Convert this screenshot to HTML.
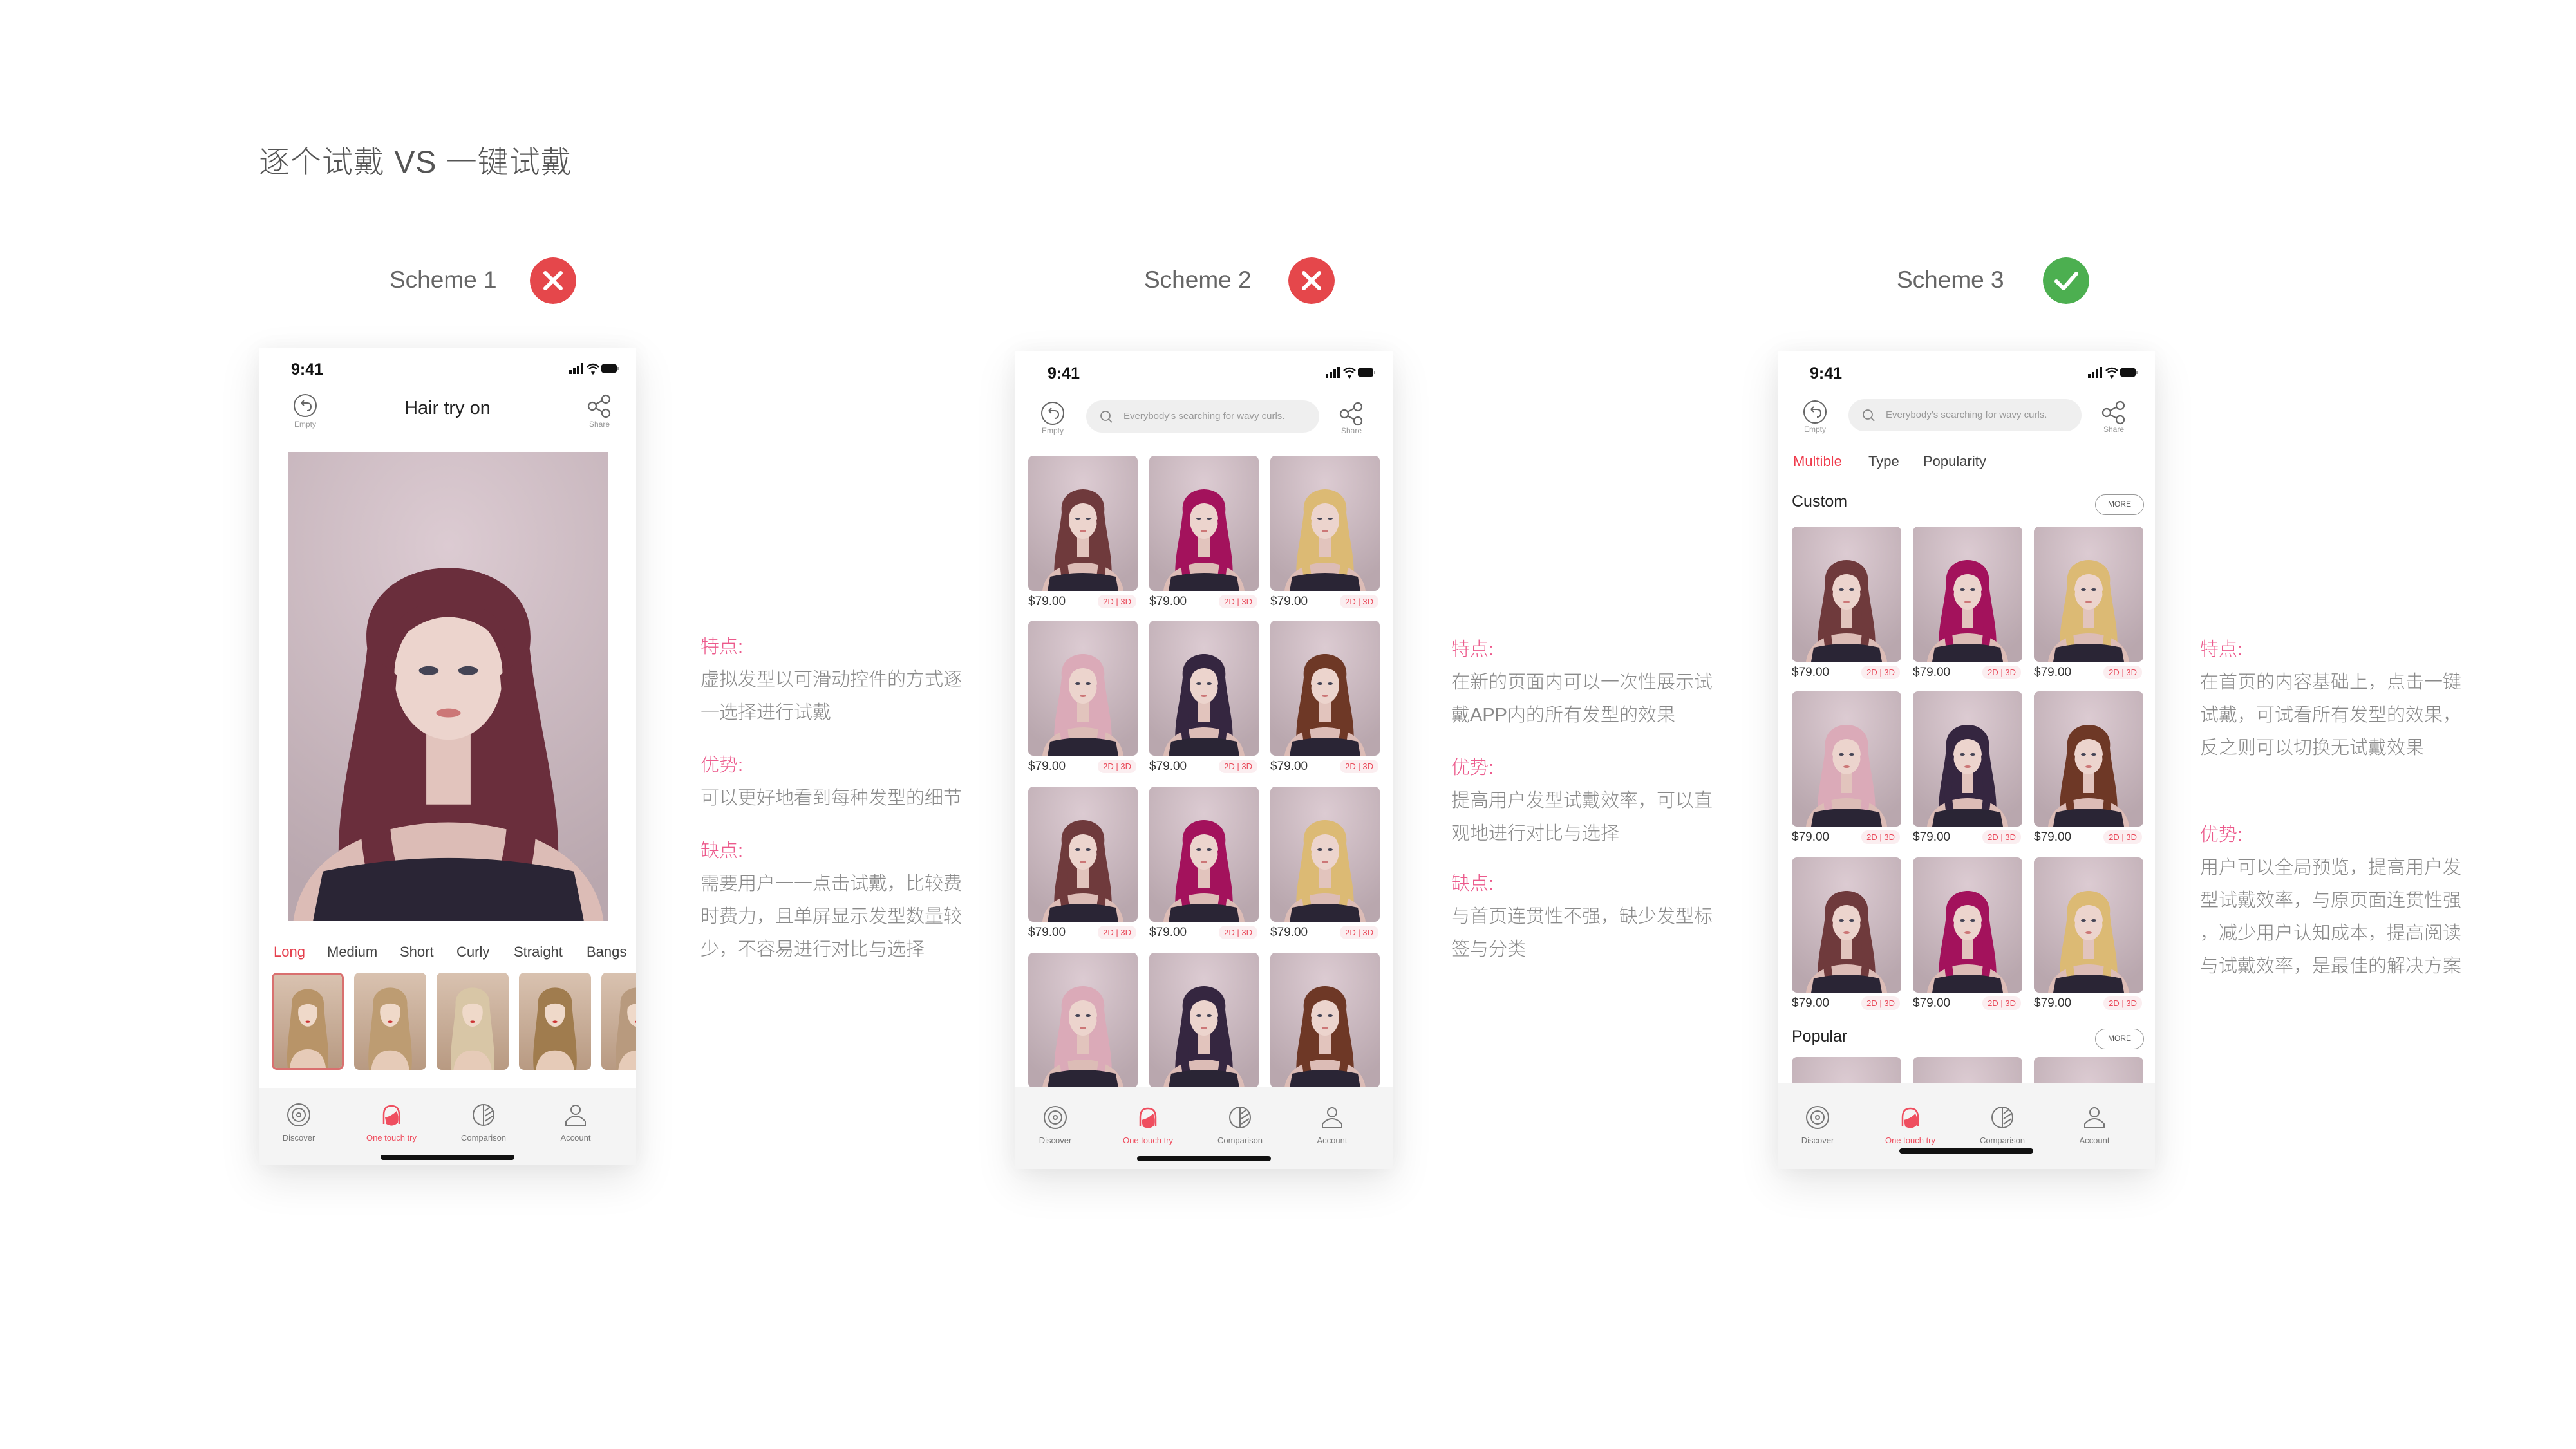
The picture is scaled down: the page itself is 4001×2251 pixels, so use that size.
<!DOCTYPE html>
<html><head><meta charset="utf-8">
<style>
*{margin:0;padding:0;box-sizing:border-box}
body{width:4001px;height:2251px;background:#fff;position:relative;overflow:hidden;font-family:"Liberation Sans","Noto Sans CJK SC",sans-serif;color:#333}
.abs{position:absolute}
.title{left:402px;top:212px;font-size:48px;color:#555;font-weight:300;letter-spacing:1px}
.sch{font-size:37px;color:#666;font-weight:300}
.ic{width:72px;height:72px;border-radius:50%}
.phone{position:absolute;width:586px;height:1270px;background:#fff;box-shadow:0 22px 60px rgba(0,0,0,.10),0 0 30px rgba(0,0,0,.04);overflow:hidden}
.time{position:absolute;left:50px;top:20px;font-size:25px;font-weight:bold;color:#111}
.stat{position:absolute;right:26px;top:24px}
.lbl{position:absolute;font-size:12px;color:#999;text-align:center;width:60px}
.nav{position:absolute;left:0;right:0;top:1140px;bottom:0;background:#f4f4f4}
.nv{position:absolute;top:52px;width:120px;text-align:center;font-size:13px;color:#777}
.nv svg{display:block;margin:0 auto 8px}
.home{position:absolute;left:189px;top:108px;width:208px;height:8px;border-radius:4px;background:#111}
.txt{position:absolute;font-size:29px;line-height:51px;color:#8a8a8a;font-family:"Liberation Sans","Noto Sans CJK SC",sans-serif;font-weight:300}
.txt .h{color:#ec5a8c}
.cell{position:absolute;width:170px}
.cell svg{display:block;border-radius:8px;width:170px;height:210px}
.price{font-size:19px;color:#333;margin-top:6px;height:24px;position:relative}
.badge{position:absolute;right:2px;top:0;font-size:13px;color:#e94b5b;background:#fbeef0;border-radius:10px;padding:3px 8px}
.tab{position:absolute;font-size:22px;color:#444}
</style></head><body>
<svg width="0" height="0" style="position:absolute">
<defs>
<radialGradient id="bg" cx="50%" cy="20%" r="80%"><stop offset="0" stop-color="#dccbd2"/><stop offset="1" stop-color="#b9a7ae"/></radialGradient>
<linearGradient id="bgw" x1="0" y1="0" x2="0" y2="1"><stop offset="0" stop-color="#d9c2b0"/><stop offset="1" stop-color="#b89a82"/></linearGradient>
<symbol id="p" viewBox="0 0 170 210">
<rect width="170" height="210" fill="url(#bg)"/>
<path d="M52 88C46 40 124 40 118 88C122 130 134 165 128 200L42 200C36 165 48 130 52 88Z" fill="currentColor"/>
<path d="M22 210C26 178 58 166 85 166C112 166 144 178 148 210Z" fill="#dcbcb6"/>
<rect x="76" y="118" width="18" height="40" fill="#e2c4bd"/>
<ellipse cx="85" cy="100" rx="22" ry="29" fill="#ecd4cd"/>
<path d="M60 92C58 58 112 58 110 92C104 78 92 74 85 74C76 74 66 80 60 92Z" fill="currentColor"/>
<path d="M58 95C50 130 46 160 52 190L64 186C58 160 62 130 64 100Z M112 95C120 130 124 160 118 190L106 186C112 160 108 130 106 100Z" fill="currentColor"/>
<ellipse cx="77" cy="98" rx="4" ry="2" fill="#445"/><ellipse cx="93" cy="98" rx="4" ry="2" fill="#445"/>
<ellipse cx="85" cy="117" rx="5" ry="2" fill="#c77"/>
<path d="M34 188Q85 176 136 188L140 210L30 210Z" fill="#2a2535"/>
</symbol>
<symbol id="pw" viewBox="0 0 170 210">
<rect width="170" height="210" fill="url(#bgw)"/>
<path d="M45 70C40 20 130 20 125 70C130 130 140 170 135 210L35 210C30 170 40 130 45 70Z" fill="currentColor"/>
<path d="M40 210C44 180 62 168 85 168C108 168 126 180 130 210Z" fill="#e6cbb8"/>
<ellipse cx="85" cy="85" rx="24" ry="32" fill="#efd9c9"/>
<path d="M58 80C56 40 114 40 112 80C102 62 70 62 58 80Z" fill="currentColor"/>
<ellipse cx="85" cy="106" rx="6" ry="2.5" fill="#c33"/>
</symbol>
</defs></svg>

<div class="abs title">逐个试戴 VS 一键试戴</div>

<div class="abs sch" style="left:605px;top:414px">Scheme 1</div>
<svg class="abs ic" style="left:823px;top:400px" viewBox="0 0 72 72"><circle cx="36" cy="36" r="36" fill="#e5474b"/><path d="M24 24L48 48M48 24L24 48" stroke="#fff" stroke-width="6" stroke-linecap="round"/></svg>
<div class="abs sch" style="left:1777px;top:414px">Scheme 2</div>
<svg class="abs ic" style="left:2001px;top:400px" viewBox="0 0 72 72"><circle cx="36" cy="36" r="36" fill="#e5474b"/><path d="M24 24L48 48M48 24L24 48" stroke="#fff" stroke-width="6" stroke-linecap="round"/></svg>
<div class="abs sch" style="left:2946px;top:414px">Scheme 3</div>
<svg class="abs ic" style="left:3173px;top:400px" viewBox="0 0 72 72"><circle cx="36" cy="36" r="36" fill="#4caf50"/><path d="M21 37L32 48L52 25" stroke="#fff" stroke-width="6" fill="none" stroke-linecap="round" stroke-linejoin="round"/></svg>

<!-- PHONE 1 -->
<div class="phone" style="left:402px;top:540px">
<div class="time">9:41</div>
<svg class="stat" width="78" height="18" viewBox="0 0 78 18"><rect x="0" y="11" width="4" height="6" fill="#111"/><rect x="6" y="8" width="4" height="9" fill="#111"/><rect x="12" y="4" width="4" height="13" fill="#111"/><rect x="18" y="0" width="4" height="17" fill="#111"/><path d="M28 6Q37 -2 46 6M31 9Q37 4 43 9M35 13L37 16L39 13" stroke="#111" stroke-width="2.5" fill="none"/><rect x="50" y="2" width="24" height="13" rx="3" fill="#111"/><rect x="75" y="6" width="2" height="5" fill="#999"/></svg>
<svg class="abs" style="left:52px;top:70px" width="40" height="40" viewBox="0 0 40 40"><circle cx="20" cy="20" r="17" stroke="#666" stroke-width="2" fill="none"/><path d="M14 16H23Q29 16 29 22Q29 28 23 28M14 16L18 12M14 16L18 20" stroke="#666" stroke-width="2" fill="none"/></svg>
<div class="lbl" style="left:42px;top:112px">Empty</div>
<div class="abs" style="left:0;width:586px;top:78px;text-align:center;font-size:29px;color:#222">Hair try on</div>
<svg class="abs" style="left:509px;top:72px" width="40" height="38" viewBox="0 0 40 38"><circle cx="30" cy="8" r="6" stroke="#666" stroke-width="2.2" fill="none"/><circle cx="9" cy="19" r="6" stroke="#666" stroke-width="2.2" fill="none"/><circle cx="30" cy="30" r="6" stroke="#666" stroke-width="2.2" fill="none"/><path d="M14 16L25 10M14 22L25 28" stroke="#666" stroke-width="2.2"/></svg>
<div class="lbl" style="left:499px;top:112px">Share</div>
<svg class="abs" style="left:46px;top:162px" width="497" height="728" viewBox="20 0 130 210" preserveAspectRatio="none"><use href="#p" x="0" y="0" width="170" height="210" color="#6a2e3c"/></svg>
<div class="tab" style="left:23px;top:926px;color:#e5404e">Long</div>
<div class="tab" style="left:106px;top:926px">Medium</div>
<div class="tab" style="left:219px;top:926px">Short</div>
<div class="tab" style="left:307px;top:926px">Curly</div>
<div class="tab" style="left:396px;top:926px">Straight</div>
<div class="tab" style="left:509px;top:926px">Bangs</div>
<svg class="abs" style="left:20px;top:971px;border:3px solid #d9706f;border-radius:8px" width="112" height="151" viewBox="0 0 170 210" preserveAspectRatio="none"><use href="#pw" width="170" height="210" color="#b89468"/></svg>
<svg class="abs" style="left:148px;top:971px;border-radius:8px" width="112" height="151" viewBox="0 0 170 210" preserveAspectRatio="none"><use href="#pw" width="170" height="210" color="#bd9c72"/></svg>
<svg class="abs" style="left:276px;top:971px;border-radius:8px" width="112" height="151" viewBox="0 0 170 210" preserveAspectRatio="none"><use href="#pw" width="170" height="210" color="#d8c6a6"/></svg>
<svg class="abs" style="left:404px;top:971px;border-radius:8px" width="112" height="151" viewBox="0 0 170 210" preserveAspectRatio="none"><use href="#pw" width="170" height="210" color="#a07c4e"/></svg>
<svg class="abs" style="left:532px;top:971px;border-radius:8px" width="112" height="151" viewBox="0 0 170 210" preserveAspectRatio="none"><use href="#pw" width="170" height="210" color="#b89a7e"/></svg>
<div class="nav" style="top:1150px">
<div class="nv" style="left:2px;top:22px"><svg width="40" height="40" viewBox="0 0 40 40"><circle cx="20" cy="20" r="17" stroke="#777" stroke-width="2" fill="none"/><circle cx="20" cy="20" r="10" stroke="#777" stroke-width="2" fill="none"/><circle cx="20" cy="20" r="3" stroke="#777" stroke-width="2" fill="none"/></svg>Discover</div>
<div class="nv" style="left:146px;top:22px;color:#ef4e5f"><svg width="40" height="40" viewBox="0 0 40 40"><path d="M8 34V20Q8 6 20 6Q32 6 32 20V34" stroke="#ef4e5f" stroke-width="2.5" fill="none"/><path d="M10 24Q20 22 28 14Q32 22 30 32Q22 40 12 34Z" fill="#ef4e5f"/></svg>One touch try</div>
<div class="nv" style="left:289px;top:22px"><svg width="40" height="40" viewBox="0 0 40 40"><circle cx="20" cy="20" r="16" stroke="#777" stroke-width="2" fill="none"/><path d="M20 4V36M22 14L30 8M22 22L34 14M22 30L34 22" stroke="#777" stroke-width="2"/></svg>Comparison</div>
<div class="nv" style="left:432px;top:22px"><svg width="40" height="40" viewBox="0 0 40 40"><circle cx="20" cy="12" r="7" stroke="#777" stroke-width="2" fill="none"/><path d="M5 36V30Q12 22 20 22Q28 22 35 30V36Z" stroke="#777" stroke-width="2" fill="none"/></svg>Account</div>
<div class="home" style="top:104px"></div>
</div>
</div>

<!-- PHONE 2 -->
<div class="phone" style="left:1577px;top:546px">
<div class="time">9:41</div>
<svg class="stat" width="78" height="18" viewBox="0 0 78 18"><rect x="0" y="11" width="4" height="6" fill="#111"/><rect x="6" y="8" width="4" height="9" fill="#111"/><rect x="12" y="4" width="4" height="13" fill="#111"/><rect x="18" y="0" width="4" height="17" fill="#111"/><path d="M28 6Q37 -2 46 6M31 9Q37 4 43 9M35 13L37 16L39 13" stroke="#111" stroke-width="2.5" fill="none"/><rect x="50" y="2" width="24" height="13" rx="3" fill="#111"/><rect x="75" y="6" width="2" height="5" fill="#999"/></svg>
<svg class="abs" style="left:38px;top:76px" width="40" height="40" viewBox="0 0 40 40"><circle cx="20" cy="20" r="17" stroke="#666" stroke-width="2" fill="none"/><path d="M14 16H23Q29 16 29 22Q29 28 23 28M14 16L18 12M14 16L18 20" stroke="#666" stroke-width="2" fill="none"/></svg>
<div class="lbl" style="left:28px;top:116px">Empty</div>
<div class="abs" style="left:110px;top:76px;width:362px;height:50px;border-radius:25px;background:#efefef;font-size:15px;color:#999;line-height:50px;padding-left:58px">Everybody's searching for wavy curls.</div>
<svg class="abs" style="left:132px;top:92px" width="20" height="20" viewBox="0 0 20 20"><circle cx="8" cy="8" r="7" stroke="#888" stroke-width="1.8" fill="none"/><path d="M13 13L18 18" stroke="#888" stroke-width="1.8"/></svg>
<svg class="abs" style="left:502px;top:78px" width="40" height="38" viewBox="0 0 40 38"><circle cx="30" cy="8" r="6" stroke="#666" stroke-width="2.2" fill="none"/><circle cx="9" cy="19" r="6" stroke="#666" stroke-width="2.2" fill="none"/><circle cx="30" cy="30" r="6" stroke="#666" stroke-width="2.2" fill="none"/><path d="M14 16L25 10M14 22L25 28" stroke="#666" stroke-width="2.2"/></svg>
<div class="lbl" style="left:492px;top:116px">Share</div>
<div class="nav" style="top:1142px">
<div class="nv" style="left:2px;top:28px"><svg width="40" height="40" viewBox="0 0 40 40"><circle cx="20" cy="20" r="17" stroke="#777" stroke-width="2" fill="none"/><circle cx="20" cy="20" r="10" stroke="#777" stroke-width="2" fill="none"/><circle cx="20" cy="20" r="3" stroke="#777" stroke-width="2" fill="none"/></svg>Discover</div>
<div class="nv" style="left:146px;top:28px;color:#ef4e5f"><svg width="40" height="40" viewBox="0 0 40 40"><path d="M8 34V20Q8 6 20 6Q32 6 32 20V34" stroke="#ef4e5f" stroke-width="2.5" fill="none"/><path d="M10 24Q20 22 28 14Q32 22 30 32Q22 40 12 34Z" fill="#ef4e5f"/></svg>One touch try</div>
<div class="nv" style="left:289px;top:28px"><svg width="40" height="40" viewBox="0 0 40 40"><circle cx="20" cy="20" r="16" stroke="#777" stroke-width="2" fill="none"/><path d="M20 4V36M22 14L30 8M22 22L34 14M22 30L34 22" stroke="#777" stroke-width="2"/></svg>Comparison</div>
<div class="nv" style="left:432px;top:28px"><svg width="40" height="40" viewBox="0 0 40 40"><circle cx="20" cy="12" r="7" stroke="#777" stroke-width="2" fill="none"/><path d="M5 36V30Q12 22 20 22Q28 22 35 30V36Z" stroke="#777" stroke-width="2" fill="none"/></svg>Account</div>
<div class="home" style="top:108px"></div>
</div>
</div>

<!-- PHONE 3 -->
<div class="phone" style="left:2761px;top:546px">
<div class="time">9:41</div>
<svg class="stat" width="78" height="18" viewBox="0 0 78 18"><rect x="0" y="11" width="4" height="6" fill="#111"/><rect x="6" y="8" width="4" height="9" fill="#111"/><rect x="12" y="4" width="4" height="13" fill="#111"/><rect x="18" y="0" width="4" height="17" fill="#111"/><path d="M28 6Q37 -2 46 6M31 9Q37 4 43 9M35 13L37 16L39 13" stroke="#111" stroke-width="2.5" fill="none"/><rect x="50" y="2" width="24" height="13" rx="3" fill="#111"/><rect x="75" y="6" width="2" height="5" fill="#999"/></svg>
<svg class="abs" style="left:38px;top:74px" width="40" height="40" viewBox="0 0 40 40"><circle cx="20" cy="20" r="17" stroke="#666" stroke-width="2" fill="none"/><path d="M14 16H23Q29 16 29 22Q29 28 23 28M14 16L18 12M14 16L18 20" stroke="#666" stroke-width="2" fill="none"/></svg>
<div class="lbl" style="left:28px;top:114px">Empty</div>
<div class="abs" style="left:110px;top:74px;width:362px;height:50px;border-radius:25px;background:#efefef;font-size:15px;color:#999;line-height:50px;padding-left:58px">Everybody's searching for wavy curls.</div>
<svg class="abs" style="left:132px;top:90px" width="20" height="20" viewBox="0 0 20 20"><circle cx="8" cy="8" r="7" stroke="#888" stroke-width="1.8" fill="none"/><path d="M13 13L18 18" stroke="#888" stroke-width="1.8"/></svg>
<svg class="abs" style="left:502px;top:76px" width="40" height="38" viewBox="0 0 40 38"><circle cx="30" cy="8" r="6" stroke="#666" stroke-width="2.2" fill="none"/><circle cx="9" cy="19" r="6" stroke="#666" stroke-width="2.2" fill="none"/><circle cx="30" cy="30" r="6" stroke="#666" stroke-width="2.2" fill="none"/><path d="M14 16L25 10M14 22L25 28" stroke="#666" stroke-width="2.2"/></svg>
<div class="lbl" style="left:492px;top:114px">Share</div>
<div class="tab" style="left:24px;top:158px;color:#ef3b4c">Multible</div>
<div class="tab" style="left:141px;top:158px">Type</div>
<div class="tab" style="left:226px;top:158px">Popularity</div>
<div class="abs" style="left:0;right:0;top:199px;height:1px;background:#e6e6e6"></div>
<div class="abs" style="left:22px;top:219px;font-size:25px;color:#222">Custom</div>
<div class="abs" style="left:493px;top:222px;width:76px;height:32px;border:1.5px solid #999;border-radius:16px;font-size:12px;line-height:29px;text-align:center;color:#555">MORE</div>
<div class="abs" style="left:22px;top:1050px;font-size:25px;color:#222">Popular</div>
<div class="abs" style="left:493px;top:1052px;width:76px;height:32px;border:1.5px solid #999;border-radius:16px;font-size:12px;line-height:29px;text-align:center;color:#555">MORE</div>
<div class="nav" style="top:1136px">
<div class="nv" style="left:2px;top:34px"><svg width="40" height="40" viewBox="0 0 40 40"><circle cx="20" cy="20" r="17" stroke="#777" stroke-width="2" fill="none"/><circle cx="20" cy="20" r="10" stroke="#777" stroke-width="2" fill="none"/><circle cx="20" cy="20" r="3" stroke="#777" stroke-width="2" fill="none"/></svg>Discover</div>
<div class="nv" style="left:146px;top:34px;color:#ef4e5f"><svg width="40" height="40" viewBox="0 0 40 40"><path d="M8 34V20Q8 6 20 6Q32 6 32 20V34" stroke="#ef4e5f" stroke-width="2.5" fill="none"/><path d="M10 24Q20 22 28 14Q32 22 30 32Q22 40 12 34Z" fill="#ef4e5f"/></svg>One touch try</div>
<div class="nv" style="left:289px;top:34px"><svg width="40" height="40" viewBox="0 0 40 40"><circle cx="20" cy="20" r="16" stroke="#777" stroke-width="2" fill="none"/><path d="M20 4V36M22 14L30 8M22 22L34 14M22 30L34 22" stroke="#777" stroke-width="2"/></svg>Comparison</div>
<div class="nv" style="left:432px;top:34px"><svg width="40" height="40" viewBox="0 0 40 40"><circle cx="20" cy="12" r="7" stroke="#777" stroke-width="2" fill="none"/><path d="M5 36V30Q12 22 20 22Q28 22 35 30V36Z" stroke="#777" stroke-width="2" fill="none"/></svg>Account</div>
<div class="home" style="top:102px"></div>
</div>
</div>

<!-- grid phone 2 -->
<div class="abs" style="left:1577px;top:546px;width:586px;height:1142px;overflow:hidden;pointer-events:none">
<div class="cell" style="left:20px;top:162px"><svg viewBox="0 0 170 210"><use href="#p" color="#6f3a3c"/></svg><div class="price">$79.00<span class="badge">2D | 3D</span></div></div>
<div class="cell" style="left:208px;top:162px"><svg viewBox="0 0 170 210"><use href="#p" color="#a3125c"/></svg><div class="price">$79.00<span class="badge">2D | 3D</span></div></div>
<div class="cell" style="left:396px;top:162px"><svg viewBox="0 0 170 210"><use href="#p" color="#dcba74"/></svg><div class="price">$79.00<span class="badge">2D | 3D</span></div></div>
<div class="cell" style="left:20px;top:418px"><svg viewBox="0 0 170 210"><use href="#p" color="#dbaab8"/></svg><div class="price">$79.00<span class="badge">2D | 3D</span></div></div>
<div class="cell" style="left:208px;top:418px"><svg viewBox="0 0 170 210"><use href="#p" color="#352640"/></svg><div class="price">$79.00<span class="badge">2D | 3D</span></div></div>
<div class="cell" style="left:396px;top:418px"><svg viewBox="0 0 170 210"><use href="#p" color="#6e3826"/></svg><div class="price">$79.00<span class="badge">2D | 3D</span></div></div>
<div class="cell" style="left:20px;top:676px"><svg viewBox="0 0 170 210"><use href="#p" color="#6f3a3c"/></svg><div class="price">$79.00<span class="badge">2D | 3D</span></div></div>
<div class="cell" style="left:208px;top:676px"><svg viewBox="0 0 170 210"><use href="#p" color="#a3125c"/></svg><div class="price">$79.00<span class="badge">2D | 3D</span></div></div>
<div class="cell" style="left:396px;top:676px"><svg viewBox="0 0 170 210"><use href="#p" color="#dcba74"/></svg><div class="price">$79.00<span class="badge">2D | 3D</span></div></div>
<div class="cell" style="left:20px;top:934px"><svg viewBox="0 0 170 210"><use href="#p" color="#dbaab8"/></svg></div>
<div class="cell" style="left:208px;top:934px"><svg viewBox="0 0 170 210"><use href="#p" color="#352640"/></svg></div>
<div class="cell" style="left:396px;top:934px"><svg viewBox="0 0 170 210"><use href="#p" color="#6e3826"/></svg></div>
</div>

<!-- grid phone 3 -->
<div class="abs" style="left:2761px;top:546px;width:586px;height:1136px;overflow:hidden;pointer-events:none">
<div class="cell" style="left:22px;top:272px"><svg viewBox="0 0 170 210"><use href="#p" color="#6f3a3c"/></svg><div class="price">$79.00<span class="badge">2D | 3D</span></div></div>
<div class="cell" style="left:210px;top:272px"><svg viewBox="0 0 170 210"><use href="#p" color="#a3125c"/></svg><div class="price">$79.00<span class="badge">2D | 3D</span></div></div>
<div class="cell" style="left:398px;top:272px"><svg viewBox="0 0 170 210"><use href="#p" color="#dcba74"/></svg><div class="price">$79.00<span class="badge">2D | 3D</span></div></div>
<div class="cell" style="left:22px;top:528px"><svg viewBox="0 0 170 210"><use href="#p" color="#dbaab8"/></svg><div class="price">$79.00<span class="badge">2D | 3D</span></div></div>
<div class="cell" style="left:210px;top:528px"><svg viewBox="0 0 170 210"><use href="#p" color="#352640"/></svg><div class="price">$79.00<span class="badge">2D | 3D</span></div></div>
<div class="cell" style="left:398px;top:528px"><svg viewBox="0 0 170 210"><use href="#p" color="#6e3826"/></svg><div class="price">$79.00<span class="badge">2D | 3D</span></div></div>
<div class="cell" style="left:22px;top:786px"><svg viewBox="0 0 170 210"><use href="#p" color="#6f3a3c"/></svg><div class="price">$79.00<span class="badge">2D | 3D</span></div></div>
<div class="cell" style="left:210px;top:786px"><svg viewBox="0 0 170 210"><use href="#p" color="#a3125c"/></svg><div class="price">$79.00<span class="badge">2D | 3D</span></div></div>
<div class="cell" style="left:398px;top:786px"><svg viewBox="0 0 170 210"><use href="#p" color="#dcba74"/></svg><div class="price">$79.00<span class="badge">2D | 3D</span></div></div>
<div class="cell" style="left:22px;top:1096px"><svg viewBox="0 0 170 210"><use href="#p" color="#6f3a3c"/></svg></div>
<div class="cell" style="left:210px;top:1096px"><svg viewBox="0 0 170 210"><use href="#p" color="#a3125c"/></svg></div>
<div class="cell" style="left:398px;top:1096px"><svg viewBox="0 0 170 210"><use href="#p" color="#dcba74"/></svg></div>
</div>

<div class="txt" style="left:1088px;top:980px">
<div class="h">特点:</div>
<div>虚拟发型以可滑动控件的方式逐</div>
<div>一选择进行试戴</div>
<div class="h" style="margin-top:31px">优势:</div>
<div>可以更好地看到每种发型的细节</div>
<div class="h" style="margin-top:31px">缺点:</div>
<div>需要用户一一点击试戴，比较费</div>
<div>时费力，且单屏显示发型数量较</div>
<div>少，不容易进行对比与选择</div>
</div>

<div class="txt" style="left:2254px;top:984px">
<div class="h">特点:</div>
<div>在新的页面内可以一次性展示试</div>
<div>戴APP内的所有发型的效果</div>
<div class="h" style="margin-top:31px">优势:</div>
<div>提高用户发型试戴效率，可以直</div>
<div>观地进行对比与选择</div>
<div class="h" style="margin-top:27px">缺点:</div>
<div>与首页连贯性不强，缺少发型标</div>
<div>签与分类</div>
</div>

<div class="txt" style="left:3417px;top:984px">
<div class="h">特点:</div>
<div>在首页的内容基础上，点击一键</div>
<div>试戴，可试看所有发型的效果，</div>
<div>反之则可以切换无试戴效果</div>
<div class="h" style="margin-top:84px">优势:</div>
<div>用户可以全局预览，提高用户发</div>
<div>型试戴效率，与原页面连贯性强</div>
<div>，减少用户认知成本，提高阅读</div>
<div>与试戴效率，是最佳的解决方案</div>
</div>
</body></html>
